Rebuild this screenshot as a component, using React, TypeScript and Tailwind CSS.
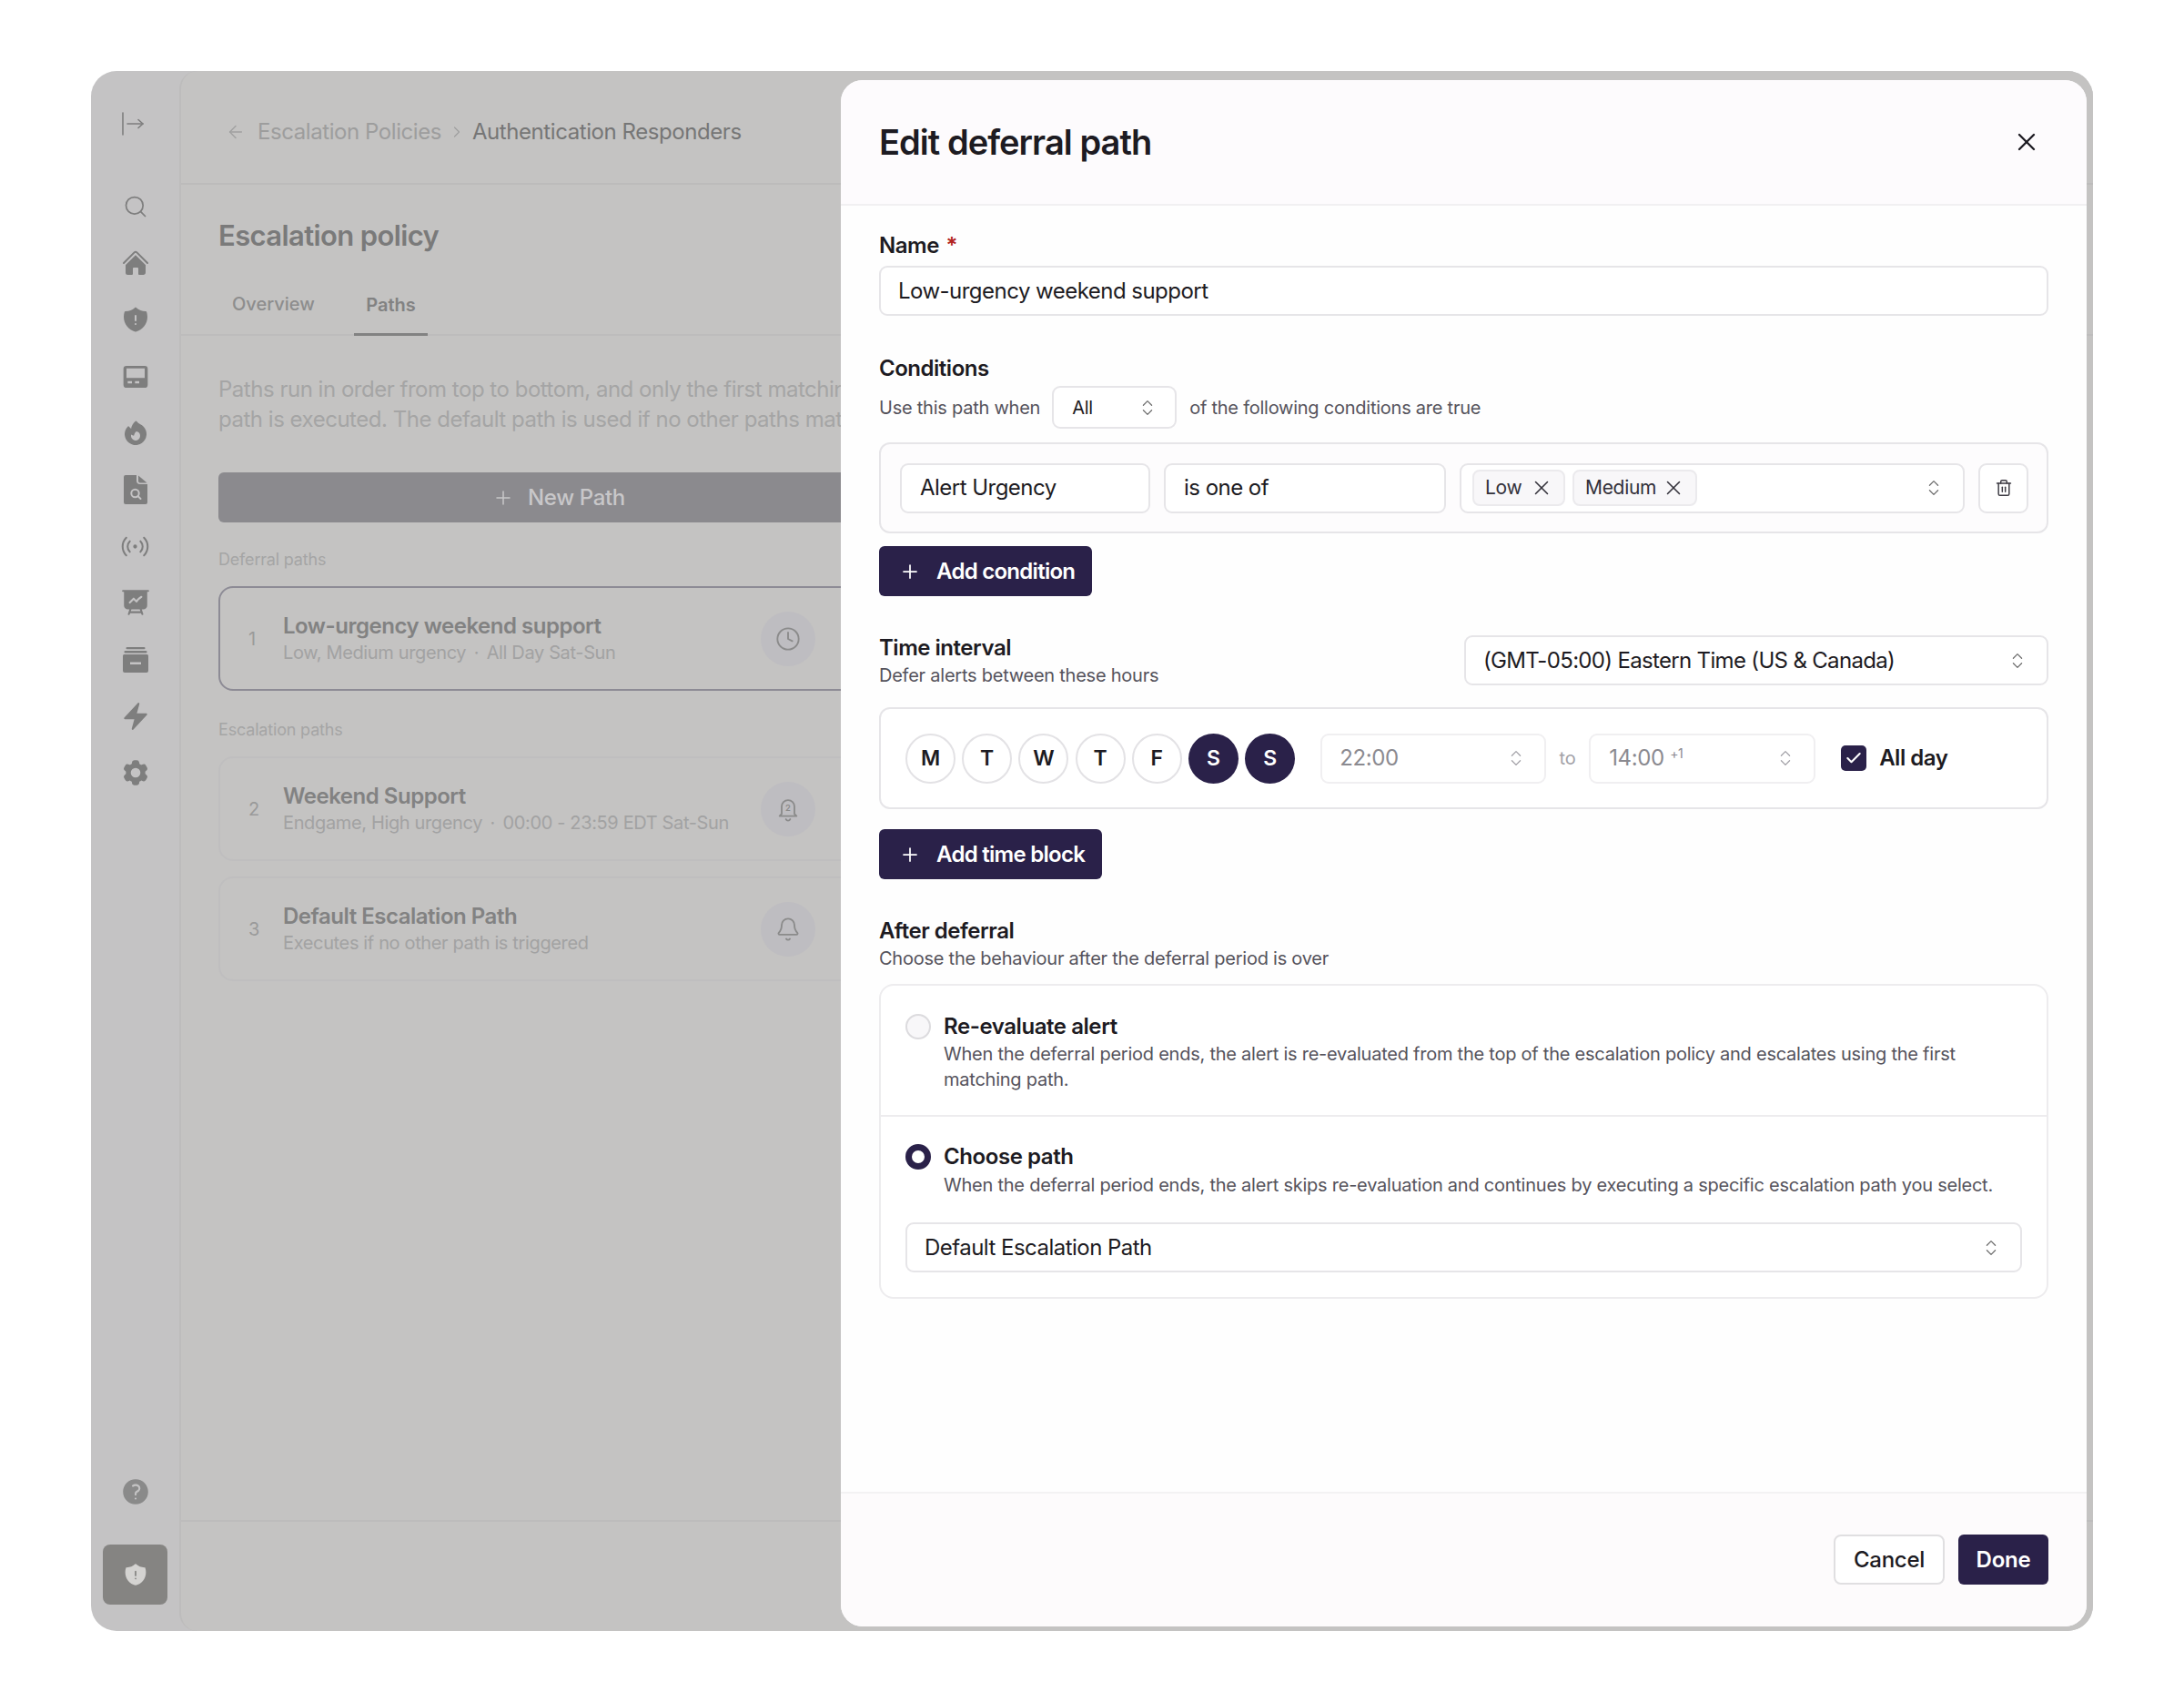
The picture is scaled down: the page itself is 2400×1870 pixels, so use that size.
import React from 'react';
import { ArrowLeft, Bell, Check, ChevronRight, ChevronsUpDown, Clock, Plus, Search, Trash2, X } from 'lucide-react';
import { HiBolt, HiCog6Tooth, HiFire, HiHome, HiPresentationChartLine, HiQuestionMarkCircle, HiShieldExclamation } from 'react-icons/hi2';

const CollapseIcon = () => (
  <svg viewBox="0 0 26 26" className="w-[26px] h-[26px] text-[#7e7e7e]" fill="none" stroke="currentColor" strokeWidth="1.6" strokeLinecap="round" strokeLinejoin="round">
    <path d="M2 1v24" />
    <path d="M7 13h17" />
    <path d="M19 8.500l5 4.500-5 4.500" />
  </svg>
);

const InboxIcon = () => (
  <svg viewBox="0 0 24 24" className="w-[32px] h-[32px]" fill="#7e7e7e">
    <path fillRule="evenodd" d="M4.500 3h15A2.500 2.500 0 0 1 22 5.500v13a2.500 2.500 0 0 1-2.500 2.500h-15A2.500 2.500 0 0 1 2 18.500v-13A2.500 2.500 0 0 1 4.500 3ZM4.500 5v8h15V5h-15Zm1 10.500v2h3.500v-2H5.500Zm6 0v2H15v-2h-3.500Z" />
  </svg>
);

const DocSearchIcon = () => (
  <svg viewBox="0 0 26 32" className="w-[26px] h-[32px]">
    <path d="M2 0h12v6a4 4 0 0 0 4 4h8v20a2 2 0 0 1-2 2H2a2 2 0 0 1-2-2V2a2 2 0 0 1 2-2Z" fill="#7e7e7e" />
    <path d="M16 0.500l9.500 8H18a2 2 0 0 1-2-2Z" fill="#7e7e7e" />
    <circle cx="12.500" cy="20" r="4.200" fill="none" stroke="#c4c3c4" strokeWidth="2" />
    <path d="M15.500 23l3 3" stroke="#c4c3c4" strokeWidth="2" strokeLinecap="round" />
  </svg>
);

const SignalIcon = () => (
  <svg viewBox="0 0 24 24" className="w-[33px] h-[33px] text-[#7e7e7e]" fill="none" stroke="currentColor" strokeWidth="1.5" strokeLinecap="round">
    <path d="M16.247 7.761a6 6 0 0 1 0 8.478" />
    <path d="M19.075 4.933a10 10 0 0 1 0 14.134" />
    <path d="M4.925 19.067a10 10 0 0 1 0-14.134" />
    <path d="M7.753 16.239a6 6 0 0 1 0-8.478" />
    <circle cx="12" cy="12" r="0.800" fill="currentColor" />
  </svg>
);

const ArchiveStackIcon = () => (
  <svg viewBox="0 0 30 30" className="w-[30px] h-[30px]" fill="#7e7e7e">
    <rect x="4.500" y="1" width="21" height="2.200" rx="1" />
    <rect x="2.500" y="5" width="25" height="2.400" rx="1" />
    <path fillRule="evenodd" d="M2.500 9h25A1.500 1.500 0 0 1 29 10.500V27a2 2 0 0 1-2 2H3a2 2 0 0 1-2-2V10.500A1.500 1.500 0 0 1 2.500 9ZM9 17.500v2.500h12v-2.500H9Z" />
  </svg>
);

const NumberedBell = ({ className }: { className?: string }) => (
  <svg viewBox="0 0 24 24" className={className} fill="none" stroke="currentColor" strokeWidth="1.6" strokeLinecap="round" strokeLinejoin="round">
    <path d="M6 16.500V9.500a6 6 0 0 1 12 0v7l2 2H4Z" />
    <path d="M10 21.500a2.200 2.200 0 0 0 4 0" />
    <text x="12" y="13.500" textAnchor="middle" fontSize="8" fontWeight="600" fill="currentColor" stroke="none">2</text>
  </svg>
);

const navIcons = [
  <Search key="search" className="w-[28px] h-[28px] text-[#7e7e7e]" strokeWidth={1.5} />,
  <HiHome key="home" className="w-[32px] h-[32px] text-[#7e7e7e]" />,
  <HiShieldExclamation key="shield" className="w-[32px] h-[32px] text-[#7e7e7e]" />,
  <InboxIcon key="inbox" />,
  <HiFire key="fire" className="w-[32px] h-[32px] text-[#7e7e7e]" />,
  <DocSearchIcon key="doc" />,
  <SignalIcon key="radio" />,
  <HiPresentationChartLine key="chart" className="w-[34px] h-[34px] text-[#7e7e7e]" />,
  <ArchiveStackIcon key="archive" />,
  <HiBolt key="bolt" className="w-[34px] h-[34px] text-[#7e7e7e]" />,
  <HiCog6Tooth key="cog" className="w-[34px] h-[34px] text-[#7e7e7e]" />,
];

const paths = [
  { n: 1, title: 'Low-urgency weekend support', sub: 'Low, Medium urgency \u2009·\u2009 All Day Sat-Sun', icon: Clock, active: true },
  { n: 2, title: 'Weekend Support', sub: 'Endgame, High urgency \u2009·\u2009 00:00 - 23:59 EDT Sat-Sun', icon: NumberedBell },
  { n: 3, title: 'Default Escalation Path', sub: 'Executes if no other path is triggered', icon: Bell },
];

const PathCard = ({ p }: { p: (typeof paths)[number] }) => (
  <div className={`h-[115px] w-[748px] flex items-center rounded-[16px] pl-[31px] pr-[90px] border-2 ${p.active ? 'border-[#8d8b95]' : 'border-[#bfbebf]'}`}>
    <span className="w-[38px] text-[20px] text-[#9a9a9a]">{p.n}</span>
    <div className="flex-1 min-w-0 whitespace-pre">
      <div className="text-[24px] leading-[30px] font-semibold tracking-[-0.02em] text-[#828282]">{p.title}</div>
      <div className="text-[20px] leading-[28px] tracking-[-0.018em] text-[#a2a2a2]">{p.sub}</div>
    </div>
    <div className="w-[60px] h-[60px] rounded-full bg-[#bebdc1] flex items-center justify-center">
      <p.icon className="w-[28px] h-[28px] text-[#8b8b8b]" strokeWidth={1.6} />
    </div>
  </div>
);

const Updown = ({ className = 'text-[#6f6f6f]' }: { className?: string }) => (
  <ChevronsUpDown className={`w-[22px] h-[22px] shrink-0 ${className}`} strokeWidth={1.4} />
);

const Field = ({ className = '', children }: { className?: string; children: React.ReactNode }) => (
  <div className={`h-[55px] flex items-center bg-white border-2 border-[#e6e5e8] rounded-[9px] text-[24px] tracking-[-0.022em] text-[#1d1b22] ${className}`}>
    {children}
  </div>
);

const DarkButton = ({ label, className = '' }: { label: string; className?: string }) => (
  <div className={`h-[55px] flex items-center bg-[#2a2149] rounded-[6px] pl-[22px] text-[24px] font-semibold tracking-[-0.03em] text-white ${className}`}>
    <Plus className="w-[24px] h-[24px] mr-[17px]" strokeWidth={1.75} />
    {label}
  </div>
);

const Chip = ({ label, className = '' }: { label: string; className?: string }) => (
  <div className={`h-[40px] flex items-center justify-between pl-[12px] pr-[11px] bg-[#f8f7f9] border-2 border-[#ebeaed] rounded-[8px] text-[21px] tracking-[-0.015em] text-[#33313a] ${className}`}>
    {label}
    <X className="w-[26px] h-[26px]" strokeWidth={1.4} />
  </div>
);

const Day = ({ label, on }: { label: string; on?: boolean }) => (
  <div className={`w-[55px] h-[55px] rounded-full flex items-center justify-center text-[23px] font-semibold ${on ? 'bg-[#2a2149] text-white' : 'bg-white border-2 border-[#e3e2e5] text-[#1d1b22]'}`}>
    {label}
  </div>
);

export default function App() {
  return (
    <div className="w-[2400px] h-[1870px] bg-white pt-[78px] pl-[100px] font-['Inter',sans-serif]">
      <div className="relative w-[2200px] h-[1714px] flex rounded-[28px] overflow-hidden bg-[#c4c3c4]">
        <aside className="w-[97px] shrink-0 flex flex-col items-center pt-[45px] pb-[29px]">
          <div className="-ml-[6px] h-[26px]"><CollapseIcon /></div>
          <div className="flex flex-col items-center mt-[62px] gap-[30.2px]">
            {navIcons.map((icon) => (
              <div key={icon.key} className="h-[32px] flex items-center justify-center">{icon}</div>
            ))}
          </div>
          <HiQuestionMarkCircle className="w-[34px] h-[34px] text-[#8a8a8a] mt-auto" />
          <div className="mt-[41px] w-[71px] h-[66px] rounded-[8px] bg-[#858482] flex items-center justify-center">
            <HiShieldExclamation className="w-[28px] h-[28px] text-[#d4d3d1]" />
          </div>
        </aside>

        <main className="flex-1 flex flex-col bg-[#c4c3c2] border-l-2 border-[#bdbcbc] rounded-l-[20px]">
          <div className="h-[125px] shrink-0 border-b-2 border-[#bcbbbb] pl-[49px] pt-[11px] flex items-center text-[24px] tracking-[-0.018em]">
            <ArrowLeft className="w-[22px] h-[22px] text-[#a0a0a0] mr-[13px]" strokeWidth={1.5} />
            <span className="text-[#9d9d9d]">Escalation Policies</span>
            <ChevronRight className="w-[20px] h-[20px] mx-[7px] text-[#a0a0a0]" strokeWidth={1.5} />
            <span className="text-[#767676]">Authentication Responders</span>
          </div>

          <div className="pl-[41px] pt-[37px]">
            <h1 className="text-[31px] leading-[38px] font-semibold tracking-[-0.02em] text-[#7a7a7a]">Escalation policy</h1>
          </div>
          <div className="mt-[31px] h-[60px] shrink-0 border-b-2 border-[#bdbcbc] pl-[41px] flex items-end">
            <div className="h-[60px] w-[149px] flex items-center pl-[15px] pb-[6px] text-[20px] font-medium text-[#8d8d8d]">Overview</div>
            <div className="h-[60px] w-[81px] -mb-[2px] border-b-[3px] border-[#828282] flex items-center justify-center pb-[6px] text-[20px] font-semibold text-[#828282]">Paths</div>
          </div>

          <div className="pl-[41px] pt-[42px] flex flex-col">
            <p className="text-[24px] leading-[33px] tracking-[-0.02em] text-[#a5a5a5] whitespace-nowrap">
              Paths run in order from top to bottom, and only the first matching
              <br />
              path is executed. The default path is used if no other paths match.
            </p>
            <div className="mt-[42px] w-[748px] h-[55px] rounded-[6px] bg-[#8b8a8e] flex items-center justify-center text-[24px] font-medium tracking-[-0.015em] text-[#c8c7c9]">
              <Plus className="w-[24px] h-[24px] mr-[15px]" strokeWidth={1.5} />
              New Path
            </div>
            <div className="mt-[29px] text-[18px] leading-[24px] tracking-[-0.01em] text-[#a5a5a5]">Deferral paths</div>
            <div className="mt-[17px]"><PathCard p={paths[0]} /></div>
            <div className="mt-[31px] text-[18px] leading-[24px] tracking-[-0.01em] text-[#a5a5a5]">Escalation paths</div>
            <div className="mt-[17px]"><PathCard p={paths[1]} /></div>
            <div className="mt-[17px]"><PathCard p={paths[2]} /></div>
          </div>

          <div className="mt-auto h-[122px] shrink-0 border-t-2 border-[#bdbcbc]" />
        </main>

        {/* sheet sits on top of the dimmed page */}
        <section className="absolute left-[824px] top-[10px] right-[7px] bottom-[5px] flex flex-col bg-[#fefefe] rounded-[24px] overflow-hidden text-[#1d1b22]">
          <header className="h-[138px] shrink-0 flex items-center justify-between pl-[42px] pr-[50px] bg-[#fdfbfd] border-b-2 border-[#f1f0f2]">
            <h2 className="text-[38px] font-semibold tracking-[-0.025em]">Edit deferral path</h2>
            <X className="w-[32px] h-[32px]" strokeWidth={1.75} />
          </header>

          <div className="flex-1 pl-[42px] pr-[42px] pt-[29px]">
            <div className="h-[29px] text-[24px] leading-[29px] font-semibold tracking-[-0.02em]">
              Name <span className="text-[#b3261e] ml-[2px]">*</span>
            </div>
            <Field className="mt-[8px] pl-[19px]">Low-urgency weekend support</Field>

            <div className="mt-[44px] h-[28px] text-[24px] leading-[28px] font-semibold tracking-[-0.02em]">Conditions</div>
            <div className="mt-[5px] flex items-center text-[20px] tracking-[-0.012em] text-[#55535c]">
              Use this path when
              <div className="ml-[13px] mr-[14px] w-[137px] h-[47px] flex items-center justify-between pl-[20px] pr-[19px] bg-white border-2 border-[#e6e5e8] rounded-[9px] text-[#1d1b22]">
                All
                <Updown />
              </div>
              of the following conditions are true
            </div>
            <div className="mt-[15px] h-[100px] flex items-center gap-[15px] pl-[21px] pr-[20px] bg-[#fdfcfd] border-2 border-[#e6e5e8] rounded-[12px]">
              <Field className="w-[275px] pl-[20px]">Alert Urgency</Field>
              <Field className="w-[310px] pl-[20px]">is one of</Field>
              <Field className="flex-1 pl-[12px] pr-[21px]">
                <Chip label="Low" className="w-[102px]" />
                <Chip label="Medium" className="w-[137px] ml-[8px]" />
                <span className="flex-1" />
                <Updown />
              </Field>
              <Field className="w-[55px] justify-center">
                <Trash2 className="w-[20px] h-[20px] text-[#3c3a42]" strokeWidth={1.75} />
              </Field>
            </div>
            <DarkButton label="Add condition" className="mt-[14px] w-[234px]" />

            <div className="mt-[43px] flex items-start justify-between">
              <div>
                <div className="h-[28px] text-[24px] leading-[28px] font-semibold tracking-[-0.02em]">Time interval</div>
                <div className="mt-[2px] h-[28px] text-[20px] leading-[28px] tracking-[-0.012em] text-[#55535c]">Defer alerts between these hours</div>
              </div>
              <Field className="w-[642px] pl-[19px] pr-[21px] justify-between tracking-[-0.028em]">
                (GMT-05:00) Eastern Time (US &amp; Canada)
                <Updown />
              </Field>
            </div>
            <div className="mt-[21px] h-[112px] flex items-center pl-[27px] bg-white border-2 border-[#e6e5e8] rounded-[12px]">
              <div className="flex gap-[7.2px]">
                <Day label="M" />
                <Day label="T" />
                <Day label="W" />
                <Day label="T" />
                <Day label="F" />
                <Day label="S" on />
                <Day label="S" on />
              </div>
              <div className="ml-[28px] w-[248px] h-[55px] flex items-center justify-between pl-[19px] pr-[20px] bg-white border-2 border-[#f0eff1] rounded-[9px] text-[24px] tracking-[-0.015em] text-[#8b8a90]">
                22:00
                <Updown className="text-[#a3a2a8]" />
              </div>
              <span className="w-[47px] text-center text-[20px] text-[#a3a2a8]">to</span>
              <div className="w-[249px] h-[55px] flex items-center justify-between pl-[20px] pr-[20px] bg-white border-2 border-[#f0eff1] rounded-[9px] text-[24px] tracking-[-0.015em] text-[#8b8a90]">
                <span>14:00 <sup className="text-[14px] -top-[8px]">+1</sup></span>
                <Updown className="text-[#a3a2a8]" />
              </div>
              <div className="ml-[28px] w-[28px] h-[28px] rounded-[5px] bg-[#2a2149] flex items-center justify-center">
                <Check className="w-[20px] h-[20px] text-white" strokeWidth={2.5} />
              </div>
              <span className="ml-[14px] text-[24px] font-semibold tracking-[-0.02em]">All day</span>
            </div>
            <DarkButton label="Add time block" className="mt-[22px] w-[245px]" />

            <div className="mt-[43px] h-[28px] text-[24px] leading-[28px] font-semibold tracking-[-0.02em]">After deferral</div>
            <div className="mt-[2px] h-[28px] text-[20px] leading-[28px] tracking-[-0.012em] text-[#55535c]">Choose the behaviour after the deferral period is over</div>
            <div className="mt-[14px] bg-white border-2 border-[#edecee] rounded-[16px]">
              <div className="flex pl-[27px] pr-[27px] pt-[31px] h-[144px] border-b-2 border-[#edecee]">
                <div className="w-[28px] h-[28px] shrink-0 rounded-full bg-[#f8f7f9] border-2 border-[#dcdbde]" />
                <div className="ml-[14px]">
                  <div className="h-[28px] text-[24px] leading-[28px] font-semibold tracking-[-0.018em]">Re-evaluate alert</div>
                  <p className="mt-[2px] text-[20px] leading-[28px] tracking-[-0.012em] text-[#55535c]">
                    When the deferral period ends, the alert is re-evaluated from the top of the escalation policy and escalates using the first matching path.
                  </p>
                </div>
              </div>
              <div className="pl-[27px] pr-[27px] pt-[30px] pb-[27px]">
                <div className="flex">
                  <div className="w-[28px] h-[28px] shrink-0 rounded-full bg-white border-[7px] border-[#2a2149]" />
                  <div className="ml-[14px]">
                    <div className="h-[28px] text-[24px] leading-[28px] font-semibold tracking-[-0.018em]">Choose path</div>
                    <p className="mt-[3px] text-[20px] leading-[28px] tracking-[-0.012em] text-[#55535c]">
                      When the deferral period ends, the alert skips re-evaluation and continues by executing a specific escalation path you select.
                    </p>
                  </div>
                </div>
                <Field className="mt-[27px] pl-[19px] pr-[21px] justify-between">
                  Default Escalation Path
                  <Updown />
                </Field>
              </div>
            </div>
          </div>

          <footer className="h-[148px] shrink-0 flex justify-end gap-[15px] pt-[45px] pr-[42px] bg-[#fdfbfc] border-t-2 border-[#f3f2f3]">
            <div className="w-[122px] h-[55px] flex items-center justify-center bg-white border-2 border-[#e0dfe1] rounded-[8px] text-[24px] font-medium tracking-[-0.01em]">Cancel</div>
            <div className="w-[99px] h-[55px] flex items-center justify-center bg-[#2a2149] rounded-[6px] text-[24px] font-semibold tracking-[-0.01em] text-white">Done</div>
          </footer>
        </section>
      </div>
    </div>
  );
}
